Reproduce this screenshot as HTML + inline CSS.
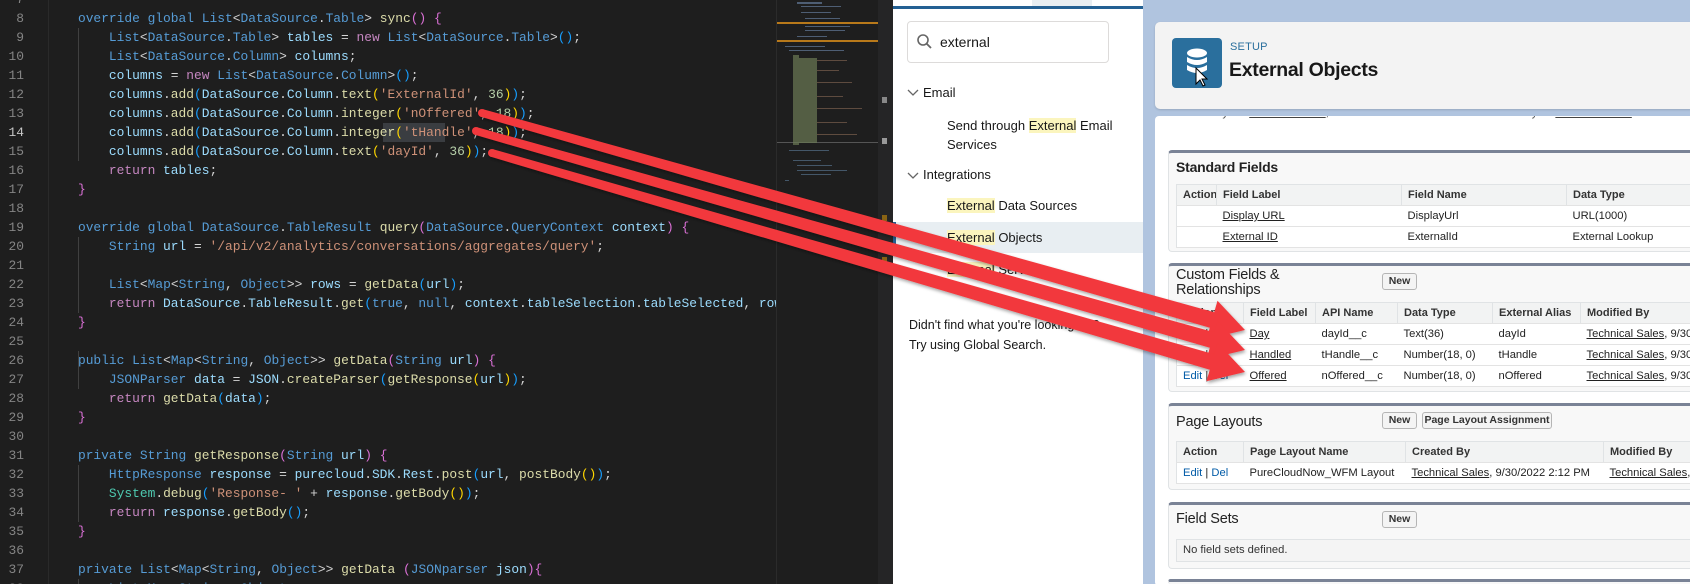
<!DOCTYPE html>
<html style="overflow:hidden;width:1690px;height:584px"><head><meta charset="utf-8"><style>
*{margin:0;padding:0;box-sizing:border-box}
body{width:1690px;height:584px;overflow:hidden;position:relative;background:#1e1e1e;font-family:"Liberation Sans",sans-serif}
.abs{position:absolute}
#code{position:absolute;left:0;top:0;width:776px;height:584px;background:#1e1e1e;overflow:hidden}
.ln{position:absolute;left:0;width:24px;text-align:right;font:12.9px/19px "Liberation Mono",monospace;color:#858585}
.cl{position:absolute;left:47px;white-space:pre;font:12.9px/19px "Liberation Mono",monospace;color:#9cdcfe}
.k{color:#569cd6}.t{color:#569cd6}.f{color:#dcdcaa}.c{color:#c586c0}.s{color:#ce9178}.n{color:#b5cea8}.p{color:#d4d4d4}
.b1{color:#ffd700}.b2{color:#da70d6}.b3{color:#179fff}.g{color:#4ec9b0}
.guide{position:absolute;width:1px;background:#404040}
#side{position:absolute;left:893px;top:0;width:250px;height:584px;background:#fff;font-size:13px;color:#181818;overflow:hidden}
.hl{background:#fbf5be}
#main{position:absolute;left:1143px;top:0;width:547px;height:584px;background:#b0c4df;overflow:hidden}
.sec{position:absolute;left:25px;width:530px;background:#f8f8f8;border-top:3px solid #7a8396;border-radius:4px;border-left:1px solid #e0e3e5;border-bottom:1px solid #e0e3e5}
.sec h3{position:absolute;left:7px;font-size:14px;font-weight:bold;color:#222;letter-spacing:-0.2px}
table{position:absolute;left:7px;border-collapse:collapse;background:#fff;font-size:11.2px;color:#222;table-layout:fixed}
td,th{height:21px;padding:0 6px;border-bottom:1px solid #e3e3e3;text-align:left;white-space:nowrap;overflow:hidden}
th{background:#f2f3f3;font-weight:bold;border-left:1px solid #e0e3e5;font-size:11px;color:#333}
th:first-child{border-left:none}
table{border:1px solid #e0e3e5}
u{text-decoration:underline}
.btn{position:absolute;height:17px;border:1px solid #b5b5b5;border-radius:3px;background:#f4f4f4;font-size:10.5px;font-weight:bold;color:#333;line-height:15px;text-align:center}
.lk{color:#015ba7}
</style></head><body>
<div id="code">
<div class="guide" style="left:78px;top:28px;height:133px"></div>
<div class="guide" style="left:78px;top:237px;height:76px"></div>
<div class="guide" style="left:78px;top:351px;height:38px"></div>
<div class="guide" style="left:78px;top:465px;height:57px"></div>
<div class="guide" style="left:78px;top:579px;height:5px"></div>
<div class="abs" style="left:48px;top:0;width:1px;height:584px;background:#2a2a2a"></div>
<div class="abs" style="left:383px;top:123px;width:62px;height:19px;background:#3a3d41"></div>

<div class="ln" style="top:-10px">7</div>
<div class="ln" style="top:9px">8</div>
<div class="ln" style="top:28px">9</div>
<div class="ln" style="top:47px">10</div>
<div class="ln" style="top:66px">11</div>
<div class="ln" style="top:85px">12</div>
<div class="ln" style="top:104px">13</div>
<div class="ln" style="top:123px;color:#c6c6c6">14</div>
<div class="ln" style="top:142px">15</div>
<div class="ln" style="top:161px">16</div>
<div class="ln" style="top:180px">17</div>
<div class="ln" style="top:199px">18</div>
<div class="ln" style="top:218px">19</div>
<div class="ln" style="top:237px">20</div>
<div class="ln" style="top:256px">21</div>
<div class="ln" style="top:275px">22</div>
<div class="ln" style="top:294px">23</div>
<div class="ln" style="top:313px">24</div>
<div class="ln" style="top:332px">25</div>
<div class="ln" style="top:351px">26</div>
<div class="ln" style="top:370px">27</div>
<div class="ln" style="top:389px">28</div>
<div class="ln" style="top:408px">29</div>
<div class="ln" style="top:427px">30</div>
<div class="ln" style="top:446px">31</div>
<div class="ln" style="top:465px">32</div>
<div class="ln" style="top:484px">33</div>
<div class="ln" style="top:503px">34</div>
<div class="ln" style="top:522px">35</div>
<div class="ln" style="top:541px">36</div>
<div class="ln" style="top:560px">37</div>
<div class="ln" style="top:579px">38</div>

<div class="cl" style="top:9px">    <span class="k">override global</span> <span class="t">List</span><span class="p">&lt;</span><span class="t">DataSource</span><span class="p">.</span><span class="t">Table</span><span class="p">&gt;</span> <span class="f">sync</span><span class="b2">()</span> <span class="b2">{</span></div>
<div class="cl" style="top:28px">        <span class="t">List</span><span class="p">&lt;</span><span class="t">DataSource</span><span class="p">.</span><span class="t">Table</span><span class="p">&gt;</span> tables <span class="p">=</span> <span class="c">new</span> <span class="t">List</span><span class="p">&lt;</span><span class="t">DataSource</span><span class="p">.</span><span class="t">Table</span><span class="p">&gt;</span><span class="b3">()</span><span class="p">;</span></div>
<div class="cl" style="top:47px">        <span class="t">List</span><span class="p">&lt;</span><span class="t">DataSource</span><span class="p">.</span><span class="t">Column</span><span class="p">&gt;</span> columns<span class="p">;</span></div>
<div class="cl" style="top:66px">        columns <span class="p">=</span> <span class="c">new</span> <span class="t">List</span><span class="p">&lt;</span><span class="t">DataSource</span><span class="p">.</span><span class="t">Column</span><span class="p">&gt;</span><span class="b3">()</span><span class="p">;</span></div>
<div class="cl" style="top:85px">        columns<span class="p">.</span><span class="f">add</span><span class="b3">(</span>DataSource<span class="p">.</span>Column<span class="p">.</span><span class="f">text</span><span class="b1">(</span><span class="s">'ExternalId'</span><span class="p">,</span> <span class="n">36</span><span class="b1">)</span><span class="b3">)</span><span class="p">;</span></div>
<div class="cl" style="top:104px">        columns<span class="p">.</span><span class="f">add</span><span class="b3">(</span>DataSource<span class="p">.</span>Column<span class="p">.</span><span class="f">integer</span><span class="b1">(</span><span class="s">'nOffered'</span><span class="p">,</span> <span class="n">18</span><span class="b1">)</span><span class="b3">)</span><span class="p">;</span></div>
<div class="cl" style="top:123px">        columns<span class="p">.</span><span class="f">add</span><span class="b3">(</span>DataSource<span class="p">.</span>Column<span class="p">.</span><span class="f">integer</span><span class="b1">(</span><span class="s">'tHandle'</span><span class="p">,</span> <span class="n">18</span><span class="b1">)</span><span class="b3">)</span><span class="p">;</span></div>
<div class="cl" style="top:142px">        columns<span class="p">.</span><span class="f">add</span><span class="b3">(</span>DataSource<span class="p">.</span>Column<span class="p">.</span><span class="f">text</span><span class="b1">(</span><span class="s">'dayId'</span><span class="p">,</span> <span class="n">36</span><span class="b1">)</span><span class="b3">)</span><span class="p">;</span></div>
<div class="cl" style="top:161px">        <span class="c">return</span> tables<span class="p">;</span></div>
<div class="cl" style="top:180px">    <span class="b2">}</span></div>
<div class="cl" style="top:218px">    <span class="k">override global</span> <span class="t">DataSource</span><span class="p">.</span><span class="t">TableResult</span> <span class="f">query</span><span class="b2">(</span><span class="t">DataSource</span><span class="p">.</span><span class="t">QueryContext</span> context<span class="b2">)</span> <span class="b2">{</span></div>
<div class="cl" style="top:237px">        <span class="t">String</span> url <span class="p">=</span> <span class="s">'/api/v2/analytics/conversations/aggregates/query'</span><span class="p">;</span></div>
<div class="cl" style="top:275px">        <span class="t">List</span><span class="p">&lt;</span><span class="t">Map</span><span class="p">&lt;</span><span class="t">String</span><span class="p">,</span> <span class="t">Object</span><span class="p">&gt;&gt;</span> rows <span class="p">=</span> <span class="f">getData</span><span class="b3">(</span>url<span class="b3">)</span><span class="p">;</span></div>
<div class="cl" style="top:294px">        <span class="c">return</span> DataSource<span class="p">.</span>TableResult<span class="p">.</span><span class="f">get</span><span class="b3">(</span><span class="k">true</span><span class="p">,</span> <span class="k">null</span><span class="p">,</span> context<span class="p">.</span>tableSelection<span class="p">.</span>tableSelected<span class="p">,</span> rows<span class="b3">)</span><span class="p">;</span></div>
<div class="cl" style="top:313px">    <span class="b2">}</span></div>
<div class="cl" style="top:351px">    <span class="k">public</span> <span class="t">List</span><span class="p">&lt;</span><span class="t">Map</span><span class="p">&lt;</span><span class="t">String</span><span class="p">,</span> <span class="t">Object</span><span class="p">&gt;&gt;</span> <span class="f">getData</span><span class="b2">(</span><span class="t">String</span> url<span class="b2">)</span> <span class="b2">{</span></div>
<div class="cl" style="top:370px">        <span class="t">JSONParser</span> data <span class="p">=</span> JSON<span class="p">.</span><span class="f">createParser</span><span class="b3">(</span><span class="f">getResponse</span><span class="b1">(</span>url<span class="b1">)</span><span class="b3">)</span><span class="p">;</span></div>
<div class="cl" style="top:389px">        <span class="c">return</span> <span class="f">getData</span><span class="b3">(</span>data<span class="b3">)</span><span class="p">;</span></div>
<div class="cl" style="top:408px">    <span class="b2">}</span></div>
<div class="cl" style="top:446px">    <span class="k">private</span> <span class="t">String</span> <span class="f">getResponse</span><span class="b2">(</span><span class="t">String</span> url<span class="b2">)</span> <span class="b2">{</span></div>
<div class="cl" style="top:465px">        <span class="t">HttpResponse</span> response <span class="p">=</span> purecloud<span class="p">.</span>SDK<span class="p">.</span>Rest<span class="p">.</span><span class="f">post</span><span class="b3">(</span>url<span class="p">,</span> <span class="f">postBody</span><span class="b1">()</span><span class="b3">)</span><span class="p">;</span></div>
<div class="cl" style="top:484px">        <span class="g">System</span><span class="p">.</span><span class="f">debug</span><span class="b3">(</span><span class="s">'Response- '</span> <span class="p">+</span> response<span class="p">.</span><span class="f">getBody</span><span class="b1">()</span><span class="b3">)</span><span class="p">;</span></div>
<div class="cl" style="top:503px">        <span class="c">return</span> response<span class="p">.</span><span class="f">getBody</span><span class="b3">()</span><span class="p">;</span></div>
<div class="cl" style="top:522px">    <span class="b2">}</span></div>
<div class="cl" style="top:560px">    <span class="k">private</span> <span class="t">List</span><span class="p">&lt;</span><span class="t">Map</span><span class="p">&lt;</span><span class="t">String</span><span class="p">,</span> <span class="t">Object</span><span class="p">&gt;&gt;</span> <span class="f">getData</span> <span class="b2">(</span><span class="t">JSONparser</span> json<span class="b2">){</span></div>
<div class="cl" style="top:579px">        <span class="t">List</span><span class="p">&lt;</span><span class="t">Map</span><span class="p">&lt;</span><span class="t">String</span><span class="p">,</span> <span class="t">Object</span><span class="p">&gt;&gt;</span> rows</div>
</div>

<!-- minimap -->
<div class="abs" style="left:776px;top:0;width:102px;height:584px;background:#1e1e1e;border-left:1px solid #2b2b2b">
<svg width="102" height="584" style="position:absolute;left:0;top:0">
<rect x="0" y="22" width="102" height="2" fill="#b8791a"/>
<rect x="0" y="40" width="102" height="2" fill="#b8791a"/>
<rect x="0" y="142" width="102" height="1" fill="#555"/>
<g fill="#5a6e8a" opacity=".8">
<rect x="20" y="2" width="25" height="2"/><rect x="24" y="6" width="40" height="1"/><rect x="24" y="12" width="30" height="1"/>
<rect x="28" y="18" width="35" height="1"/><rect x="28" y="26" width="45" height="1"/><rect x="28" y="30" width="40" height="1"/>
<rect x="20" y="36" width="30" height="1"/><rect x="8" y="46" width="40" height="1"/><rect x="12" y="50" width="55" height="1"/>
</g>
<g fill="#6b7a55" opacity=".7">
<rect x="16" y="55" width="6" height="90"/><rect x="22" y="58" width="18" height="85"/>
</g>
<g fill="#8a6a55" opacity=".6">
<rect x="40" y="60" width="30" height="1"/><rect x="40" y="70" width="22" height="1"/><rect x="40" y="82" width="35" height="1"/>
<rect x="40" y="96" width="26" height="1"/><rect x="40" y="108" width="45" height="1"/><rect x="40" y="122" width="30" height="1"/>
<rect x="40" y="134" width="40" height="1"/>
</g>
<g fill="#55708a" opacity=".7">
<rect x="12" y="150" width="40" height="1"/><rect x="16" y="160" width="28" height="1"/><rect x="20" y="165" width="35" height="1"/>
<rect x="20" y="170" width="50" height="1"/><rect x="24" y="174" width="30" height="1"/><rect x="8" y="180" width="4" height="1"/>
</g>
</svg>
</div>
<div class="abs" style="left:878px;top:0;width:15px;height:584px;background:#252526">
<div class="abs" style="left:4px;top:97px;width:5px;height:6px;background:#888"></div>
<div class="abs" style="left:4px;top:138px;width:5px;height:6px;background:#999"></div>
<div class="abs" style="left:4px;top:215px;width:5px;height:6px;background:#8a6414"></div>
<div class="abs" style="left:4px;top:257px;width:5px;height:6px;background:#8a6414"></div>
</div>

<!-- sidebar -->
<div id="side">
<div class="abs" style="left:139px;top:0;width:60px;height:6px;background:#e8eef2"></div>
<div class="abs" style="left:0;top:6px;width:250px;height:3px;background:#236093"></div>
<div class="abs" style="left:14px;top:21px;width:202px;height:42px;border:1px solid #dddbda;border-radius:4px;background:#fff"></div>
<svg class="abs" style="left:23px;top:33px" width="18" height="18" viewBox="0 0 18 18"><circle cx="7" cy="7" r="5" fill="none" stroke="#666" stroke-width="1.6"/><line x1="10.7" y1="10.7" x2="15" y2="15" stroke="#666" stroke-width="1.8"/></svg>
<div class="abs" style="left:47px;top:34px;font-size:14px;color:#181818">external</div>
<svg class="abs" style="left:14px;top:89px" width="12" height="8"><path d="M1 1 L6 6 L11 1" fill="none" stroke="#666" stroke-width="1.3"/></svg>
<div class="abs" style="left:30px;top:85px;font-size:13px">Email</div>
<div class="abs" style="left:54px;top:116px;font-size:13px;line-height:19px">Send through <span class="hl">External</span> Email<br>Services</div>
<svg class="abs" style="left:14px;top:172px" width="12" height="8"><path d="M1 1 L6 6 L11 1" fill="none" stroke="#666" stroke-width="1.3"/></svg>
<div class="abs" style="left:30px;top:167px;font-size:13px">Integrations</div>
<div class="abs" style="left:54px;top:198px;font-size:13px"><span class="hl">External</span> Data Sources</div>
<div class="abs" style="left:0;top:222px;width:250px;height:31px;background:#e8eef2;border-left:3px solid #236093"></div>
<div class="abs" style="left:54px;top:230px;font-size:13px"><span class="hl">External</span> Objects</div>
<div class="abs" style="left:54px;top:262px;font-size:13px"><span class="hl">External</span> Services</div>
<div class="abs" style="left:16px;top:315px;font-size:12.5px;line-height:20px">Didn't find what you're looking for?<br>Try using Global Search.</div>
</div>

<!-- main -->
<div id="main">
<div class="abs" style="left:12px;top:22px;width:540px;height:87px;background:#f3f3f3;border-radius:5px;box-shadow:0 1px 2px rgba(0,0,0,.15)"></div>
<div class="abs" style="left:29px;top:38px;width:50px;height:50px;background:#2a6f9d;border-radius:4px">
<svg width="50" height="50"><g fill="#fff"><ellipse cx="25" cy="15" rx="10" ry="4.5"/><path d="M15 19 q10 6 20 0 v5 q-10 6 -20 0z"/><path d="M15 27 q10 6 20 0 v5 q-10 6 -20 0z"/></g>
<path d="M24 30 l0 16 l4 -4 l3 6 l2 -1 l-3 -6 l5 0z" fill="#fff" stroke="#000" stroke-width="1"/></svg>
</div>
<div class="abs" style="left:87px;top:41px;font-size:11px;color:#2a6f9d;letter-spacing:.2px">SETUP</div>
<div class="abs" style="left:86px;top:59px;font-size:19.5px;font-weight:bold;color:#181818;letter-spacing:-.3px">External Objects</div>

<div class="abs" style="left:12px;top:116px;width:540px;height:470px;background:#fff;border-radius:4px;overflow:hidden">
<div class="abs" style="left:18px;top:-9px;font-size:11px;color:#444;white-space:nowrap">Created By &nbsp;&nbsp;&nbsp;&nbsp;&nbsp; <u>Technical Sales</u>, 9/30/2022 2:12 PM &nbsp;&nbsp;&nbsp;&nbsp;&nbsp;&nbsp;&nbsp;&nbsp;&nbsp;&nbsp;&nbsp;&nbsp;&nbsp;&nbsp;&nbsp;&nbsp; Modified By &nbsp;&nbsp;&nbsp;&nbsp; <u>Technical Sales</u></div>
</div>

<div class="sec" style="top:150px;height:102px">
<h3 style="top:6px">Standard Fields</h3>
<table style="top:31px;width:530px"><colgroup><col style="width:40px"><col style="width:185px"><col style="width:165px"><col></colgroup>
<tr><th>Action</th><th>Field Label</th><th>Field Name</th><th>Data Type</th></tr>
<tr><td></td><td><u>Display URL</u></td><td>DisplayUrl</td><td>URL(1000)</td></tr>
<tr><td></td><td><u>External ID</u></td><td>ExternalId</td><td>External Lookup</td></tr>
</table></div>

<div class="sec" style="top:263px;height:129px">
<h3 style="top:2px;font-weight:normal;font-size:14.5px;line-height:15px">Custom Fields &amp;<br>Relationships</h3>
<div class="btn" style="left:213px;top:7px;width:35px">New</div>
<table style="top:36px;width:530px"><colgroup><col style="width:67px"><col style="width:72px"><col style="width:82px"><col style="width:95px"><col style="width:88px"><col></colgroup>
<tr><th>Action</th><th>Field Label</th><th>API Name</th><th>Data Type</th><th>External Alias</th><th>Modified By</th></tr>
<tr><td><span class="lk">Edit</span> | <span class="lk">Del</span></td><td><u>Day</u></td><td>dayId__c</td><td>Text(36)</td><td>dayId</td><td><u>Technical Sales</u>, 9/30/2022</td></tr>
<tr><td><span class="lk">Edit</span> | <span class="lk">Del</span></td><td><u>Handled</u></td><td>tHandle__c</td><td>Number(18, 0)</td><td>tHandle</td><td><u>Technical Sales</u>, 9/30/2022</td></tr>
<tr><td><span class="lk">Edit</span> | <span class="lk">Del</span></td><td><u>Offered</u></td><td>nOffered__c</td><td>Number(18, 0)</td><td>nOffered</td><td><u>Technical Sales</u>, 9/30/2022</td></tr>
</table></div>

<div class="sec" style="top:403px;height:87px">
<h3 style="top:8px;font-weight:normal;font-size:14.5px">Page Layouts</h3>
<div class="btn" style="left:213px;top:6px;width:35px">New</div>
<div class="btn" style="left:253px;top:6px;width:130px">Page Layout Assignment</div>
<table style="top:35px;width:530px"><colgroup><col style="width:67px"><col style="width:162px"><col style="width:198px"><col></colgroup>
<tr><th>Action</th><th>Page Layout Name</th><th>Created By</th><th>Modified By</th></tr>
<tr><td><span class="lk">Edit</span> | <span class="lk">Del</span></td><td>PureCloudNow_WFM Layout</td><td><u>Technical Sales</u>, 9/30/2022 2:12 PM</td><td><u>Technical Sales</u>, 9/30/2022</td></tr>
</table></div>

<div class="sec" style="top:502px;height:67px">
<h3 style="top:6px;font-weight:normal;font-size:14.5px">Field Sets</h3>
<div class="btn" style="left:213px;top:6px;width:35px">New</div>
<div class="abs" style="left:7px;top:34px;width:530px;height:23px;background:#f4f4f4;border:1px solid #e0e3e5;font-size:11.2px;line-height:21px;padding-left:6px;color:#333">No field sets defined.</div>
</div>
<div class="sec" style="top:579px;height:5px;border-bottom:none"></div>
</div>

<!-- arrows -->
<svg class="abs" style="left:0;top:0" width="1690" height="584">
<defs><filter id="sh" x="-5%" y="-20%" width="110%" height="140%"><feDropShadow dx="1" dy="2" stdDeviation="1.5" flood-color="#000" flood-opacity=".35"/></filter></defs>
<g fill="#f2393c" filter="url(#sh)">
<circle cx="482" cy="113" r="4"/>
<polygon points="480.9,116.8 483.1,109.2 1214.2,312.3 1217.5,300.8 1245,330 1206.5,339.2 1209.8,327.7"/>
<circle cx="476" cy="131" r="4"/>
<polygon points="474.9,134.8 477.1,127.2 1214.2,332.3 1217.5,320.8 1245,350 1206.5,359.2 1209.8,347.7"/>
<circle cx="492" cy="153" r="4"/>
<polygon points="490.9,156.8 493.1,149.2 1214.2,354.3 1217.6,342.8 1245,372 1206.4,381.2 1209.8,369.7"/>
</g>
</svg>
</body></html>
